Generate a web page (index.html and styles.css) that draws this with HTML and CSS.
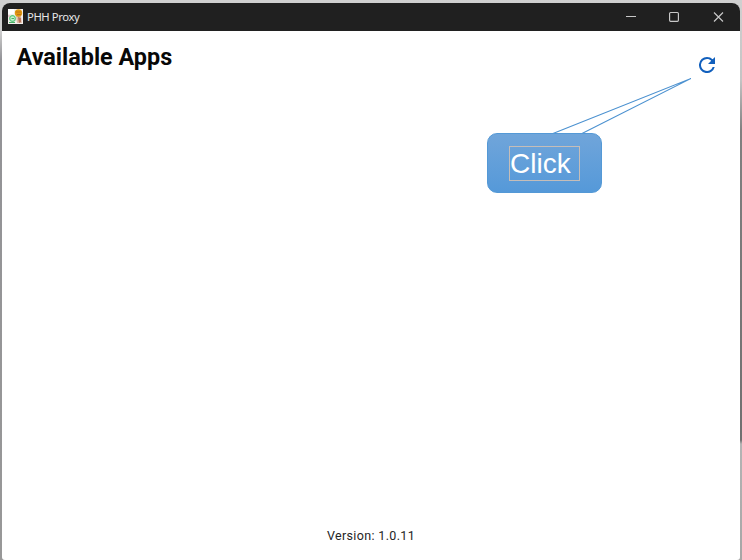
FILE: index.html
```html
<!DOCTYPE html>
<html lang="en">
<head>
<meta charset="utf-8">
<title>PHH Proxy</title>
<link rel="stylesheet" href="styles.css">
</head>
<body>
<div class="window">
  <header class="titlebar">
    <svg class="app-icon" viewBox="0 0 15 15">
      <rect width="15" height="15" fill="#f4efed"/>
      <path d="M0 0h6v5H0z" fill="#fff"/>
      <path d="M8 7h5l1 7H9z" fill="#dfbda8"/>
      <path d="M10 8l3 1v4l-2 1z" fill="#b9765a"/>
      <circle cx="10.5" cy="4" r="3.7" fill="#e0980f"/>
      <path d="M8 3h5M9 5.500h4" stroke="#b8681a" stroke-width=".8"/>
      <circle cx="4.500" cy="9.500" r="2.800" fill="#c5efd0" stroke="#5bc97c" stroke-width="1.2"/>
      <path d="M3.500 9.500h2.500M1 13.500h6" stroke="#38a85a" stroke-width=".9"/>
      <path d="M0 7h2" stroke="#d5a4b0"/>
    </svg>
    <span class="title">PHH Proxy</span>
    <svg class="controls" viewBox="0 0 100 12">
      <path d="M1 5.500h10"/>
      <rect x="44.600" y="1.500" width="8.800" height="8.800" rx="1"/>
      <path d="M89 1.500l9 9M98 1.500l-9 9"/>
    </svg>
  </header>
  <main class="content">
    <div class="heading-row">
      <h1>Available Apps</h1>
      <svg class="refresh" viewBox="4 4 16 16">
        <path d="M17.65 6.35A7.96 7.96 0 0 0 12 4a8 8 0 1 0 7.73 10h-2.08A6 6 0 1 1 12 6c1.66 0 3.14.69 4.22 1.78L13 11h7V4z"/>
      </svg>
    </div>
    <footer>Version: 1.0.11</footer>
  </main>
</div>
<svg class="pointer" viewBox="0 0 140 58"><path d="M2 56.500L140 1.500L31 56.500"/></svg>
<div class="callout"><span class="callout-text">Click</span></div>
</body>
</html>
```
FILE: styles.css
```css
* { box-sizing: border-box; }
body {
  margin: 0;
  width: 742px;
  height: 560px;
  overflow: hidden;
  padding: 3px 2px 0;
  background:
    linear-gradient(#d0d0d0 0, #d0d0d0 30px, #929296 60px, #989898 100%) left / 50% 100% no-repeat,
    linear-gradient(#d0d0d0 0, #c4c4c4 80px, #808080 130px, #707070 440px, #b4b4b4 444px, #a6a6a6 100%) right / 50% 100% no-repeat;
}
.window {
  display: flex;
  flex-direction: column;
  height: 557px;
  width: 738px;
  border-radius: 8px 8px 3px 3px;
  overflow: hidden;
  background: #fff;
}
.titlebar {
  display: flex;
  align-items: center;
  flex: 0 0 28px;
  padding: 0 15px 0 6px;
  background: #202020;
  color: #e6e6e6;
}
.app-icon { width: 15px; height: 15px; margin: -1px 4px 0 0; }
.title { font: 11.3px/16px "Noto Sans", sans-serif; letter-spacing: -.42px; }
.controls {
  width: 100px;
  height: 12px;
  margin-left: auto;
  fill: none;
  stroke: #c8c8c8;
  stroke-width: 1.15;
}
.content { display: flex; flex: 1; flex-direction: column; }
.heading-row {
  display: flex;
  justify-content: space-between;
  padding: 12px 25px 0 14.5px;
}
h1 { margin: 0; color: #080808; font: 700 23.4px/28px Roboto, sans-serif; }
.refresh { width: 16px; height: 16px; margin-top: 14px; fill: #1260bd; }
footer {
  margin-top: auto;
  padding-bottom: 15px;
  text-align: center;
  font: 12.5px/18px Roboto, sans-serif;
  letter-spacing: .35px;
  color: #252525;
}
.pointer {
  position: absolute;
  left: 551px;
  top: 77px;
  width: 140px;
  height: 58px;
  fill: none;
  stroke: #4b91d0;
  stroke-width: 1.1;
}
.callout {
  position: absolute;
  left: 487px;
  top: 133px;
  width: 115px;
  height: 60px;
  padding: 13px 21px;
  border: 1px solid #5499d6;
  border-radius: 10px;
  background: linear-gradient(#70a5da, #5599d9);
}
.callout-text {
  display: block;
  width: 71px;
  height: 35px;
  margin-top: -1px;
  border: 1px solid #c5bdb8;
  color: #fff;
  font: 28px/33px "Liberation Sans", sans-serif;
}
```
